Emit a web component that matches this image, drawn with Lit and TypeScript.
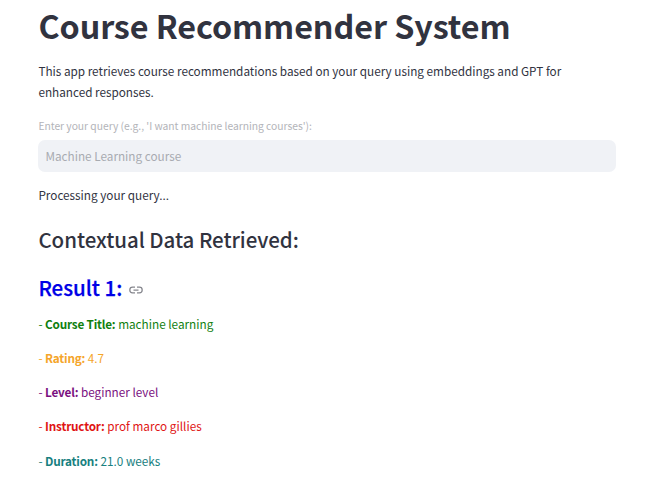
import { LitElement, html, css } from "lit";
import { customElement } from "lit/decorators.js";

interface Detail {
  kind: string;
  label: string;
  value: string;
}

const details: Detail[] = [
  { kind: "title", label: "Course Title:", value: "machine learning" },
  { kind: "rating", label: "Rating:", value: "4.7" },
  { kind: "level", label: "Level:", value: "beginner level" },
  { kind: "instructor", label: "Instructor:", value: "prof marco gillies" },
  { kind: "duration", label: "Duration:", value: "21.0 weeks" },
];

@customElement("app-root")
export class AppRoot extends LitElement {
  static styles = css`
    :host {
      display: block;
      box-sizing: border-box;
      height: 496px;
      overflow: hidden;
      padding: 3px 30px 0 38.4px;
      background: #fff;
      color: #31333f;
      font-family: "Noto Sans CJK SC", "Noto Sans", sans-serif;
      font-size: 11.75px;
      line-height: 21px;
    }
    h1, h2, h3, p { margin: 0; }
    h1 {
      font-size: 32.3px;
      line-height: 44px;
      font-weight: 700;
      letter-spacing: -0.08px;
      white-space: nowrap;
    }
    .intro { margin-top: 13px; width: 560px; letter-spacing: -0.008px; }
    .label {
      display: block;
      margin-top: 14px;
      font-size: 10.3px;
      line-height: 19px;
      color: #b3b4b9;
      letter-spacing: -0.02px;
    }
    .field {
      display: flex;
      align-items: center;
      box-sizing: border-box;
      height: 32px;
      margin-top: 5px;
      padding: 0 7px 2px;
      border-radius: 7px;
      background: #f0f2f6;
      color: #a8abb1;
    }
    .status { margin-top: 12px; }
    h2 {
      margin-top: 20px;
      font-size: 20.5px;
      line-height: 28px;
      font-weight: 500;
      letter-spacing: -0.04px;
    }
    h3 {
      display: flex;
      align-items: center;
      margin-top: 20px;
      font-size: 20.5px;
      line-height: 28px;
      font-weight: 500;
      color: #0000e6;
      -webkit-text-stroke: 0.25px #0000e6;
    }
    .link { width: 14px; height: 14px; margin: 5px 0 0 6.4px; }
    .details {
      display: flex;
      flex-direction: column;
      gap: 13.2px;
      margin-top: 11.8px;
    }
    .details b { font-weight: 700; letter-spacing: -0.21px; }
    .title { color: #0f800f; }
    .rating { color: #f5a52a; }
    .level { color: #7a0f80; }
    .instructor { color: #e01414; }
    .duration { color: #178080; }
  `;

  render() {
    return html`
      <h1>Course Recommender System</h1>
      <p class="intro">
        This app retrieves course recommendations based on your query using embeddings and GPT for
        enhanced responses.
      </p>
      <span class="label">Enter your query (e.g., 'I want machine learning courses'):</span>
      <div class="field">Machine Learning course</div>
      <p class="status">Processing your query...</p>
      <h2>Contextual Data Retrieved:</h2>
      <h3>
        <span>Result 1:</span>
        <svg class="link" viewBox="0 0 14 14" fill="none" stroke="#85868d" stroke-width="1.25">
          <path d="M6 4.2H3.6a2.8 2.8 0 0 0 0 5.6H6M8 4.2h2.4a2.8 2.8 0 0 1 0 5.6H8M4.5 7h5" />
        </svg>
      </h3>
      <div class="details">
        ${details.map((d) => html`<p class=${d.kind}>- <b>${d.label}</b> ${d.value}</p>`)}
      </div>
    `;
  }
}
